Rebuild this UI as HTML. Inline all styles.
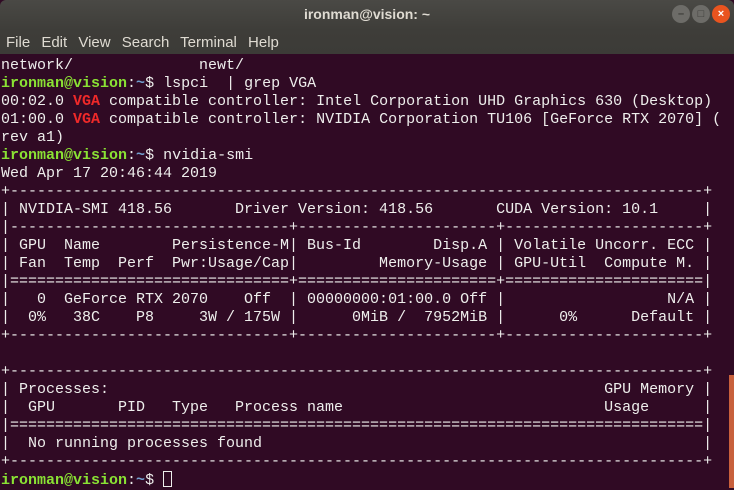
<!DOCTYPE html>
<html><head><meta charset="utf-8"><style>
*{margin:0;padding:0;box-sizing:border-box}
html,body{width:734px;height:488px;overflow:hidden;background:#300a24}
.top{position:absolute;left:0;top:0;width:734px;height:54px;background:linear-gradient(#4a4945 0px,#3e3d39 30px,#3c3b37 54px);border-radius:6px 6px 0 0}
.title{position:absolute;top:6px;left:0;width:734px;text-align:center;color:#dfdbd2;font:bold 14px "Liberation Sans",sans-serif}
.menu{position:absolute;top:34px;left:6px;color:#dfdbd2;font:15px "Liberation Sans",sans-serif;word-spacing:7px}
.btn{position:absolute;top:5px;width:18px;height:18px;border-radius:50%;background:#6d6c68;color:#3c3b37;font:bold 11px "Liberation Sans",sans-serif;text-align:center;line-height:18px}
.term{position:absolute;left:0;top:54px;width:734px;height:434px;background:#300a24}
pre{position:absolute;left:1px;top:3px;font:15px/18px "Liberation Mono",monospace;color:#eeeeec;white-space:pre}
.g{color:#8ae234;font-weight:bold}.b{color:#729fcf;font-weight:bold}.r{color:#ef2929;font-weight:bold}
.cur{display:inline-block;width:9px;height:16px;border:1px solid #eeeeec;vertical-align:-3px}
.sb{position:absolute;left:729px;top:375px;width:5px;height:113px;background:#c8603c}
</style></head><body>
<div class="top"><div class="title">ironman@vision: ~</div>
<div class="menu">File Edit View Search Terminal Help</div>
<div class="btn" style="left:672px">–</div>
<div class="btn" style="left:692px">□</div>
<div class="btn" style="left:712px;background:#e9541f;color:#fff">×</div>
</div>
<div class="term"><pre>network/              newt/
<span class="g">ironman@vision</span>:<span class="b">~</span>$ lspci  | grep VGA
00:02.0 <span class="r">VGA</span> compatible controller: Intel Corporation UHD Graphics 630 (Desktop)
01:00.0 <span class="r">VGA</span> compatible controller: NVIDIA Corporation TU106 [GeForce RTX 2070] (
rev a1)
<span class="g">ironman@vision</span>:<span class="b">~</span>$ nvidia-smi
Wed Apr 17 20:46:44 2019
+-----------------------------------------------------------------------------+
| NVIDIA-SMI 418.56       Driver Version: 418.56       CUDA Version: 10.1     |
|-------------------------------+----------------------+----------------------+
| GPU  Name        Persistence-M| Bus-Id        Disp.A | Volatile Uncorr. ECC |
| Fan  Temp  Perf  Pwr:Usage/Cap|         Memory-Usage | GPU-Util  Compute M. |
|===============================+======================+======================|
|   0  GeForce RTX 2070    Off  | 00000000:01:00.0 Off |                  N/A |
|  0%   38C    P8     3W / 175W |      0MiB /  7952MiB |      0%      Default |
+-------------------------------+----------------------+----------------------+

+-----------------------------------------------------------------------------+
| Processes:                                                       GPU Memory |
|  GPU       PID   Type   Process name                             Usage      |
|=============================================================================|
|  No running processes found                                                 |
+-----------------------------------------------------------------------------+
<span class="g">ironman@vision</span>:<span class="b">~</span>$ <span class="cur"></span></pre></div>
<div class="sb"></div>
</body></html>
